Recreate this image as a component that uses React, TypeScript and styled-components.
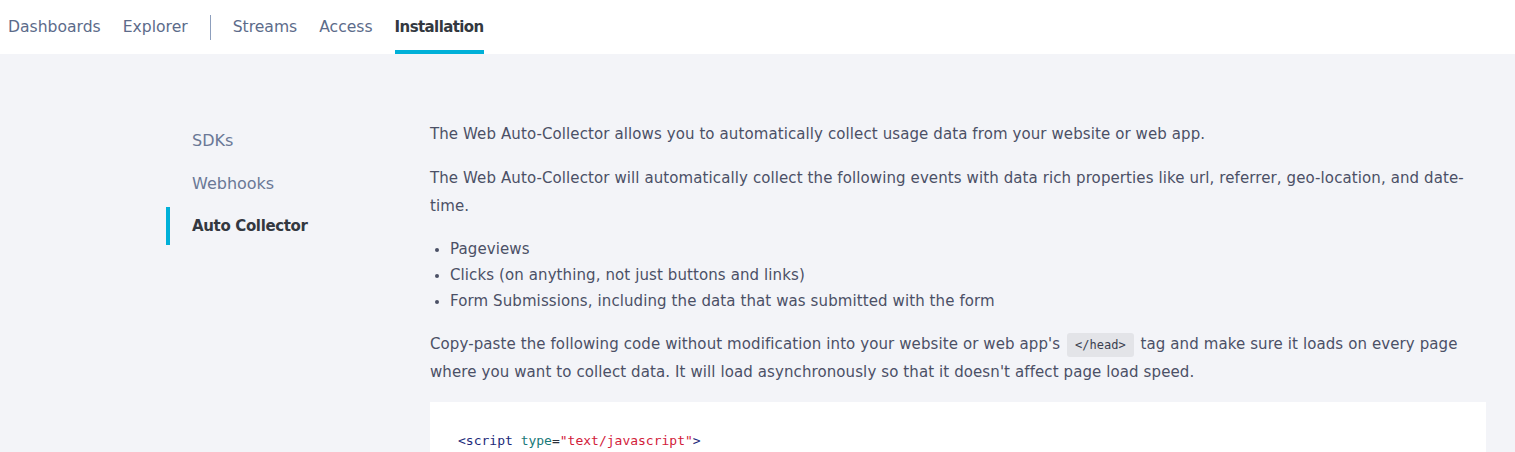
import styled, { createGlobalStyle } from "styled-components";

const GlobalStyle = createGlobalStyle`
  html, body {
    margin: 0;
    padding: 0;
    background: #f3f4f8;
    font-family: "DejaVu Sans", "Liberation Sans", sans-serif;
  }
`;

const Header = styled.header`
  height: 54px;
  background: #ffffff;
  display: flex;
  align-items: stretch;
  padding-left: 8px;
  gap: 22px;
`;

const NavItem = styled.a<{ $active?: boolean }>`
  display: flex;
  align-items: center;
  font-size: ${p => (p.$active ? "15px" : "15.6px")};
  letter-spacing: ${p => (p.$active ? "-0.6px" : "0")};
  color: ${p => (p.$active ? "#333840" : "#5c6b8a")};
  font-weight: ${p => (p.$active ? 700 : 400)};
  border-bottom: 4px solid ${p => (p.$active ? "#00b0d8" : "transparent")};
  border-top: 3px solid transparent;
  text-decoration: none;
  cursor: pointer;
`;

const Divider = styled.span`
  align-self: center;
  width: 1px;
  height: 25px;
  background: #8d9fbd;
`;

const Main = styled.main`
  display: grid;
  grid-template-columns: 264px 1fr;
  padding: 66px 29px 0 166px;
`;

const SideNav = styled.nav`
  display: flex;
  flex-direction: column;
  gap: 5px;
  padding-top: 1px;
`;

const SideItem = styled.a<{ $active?: boolean }>`
  height: 38px;
  display: flex;
  align-items: center;
  padding-left: 22px;
  font-size: ${p => (p.$active ? "15px" : "16px")};
  letter-spacing: ${p => (p.$active ? "-0.35px" : "0")};
  color: ${p => (p.$active ? "#333840" : "#6a7896")};
  font-weight: ${p => (p.$active ? 700 : 400)};
  border-left: 4px solid ${p => (p.$active ? "#00b0d8" : "transparent")};
  cursor: pointer;
`;

const Content = styled.section`
  color: #4b5066;
  font-size: 15px;
  letter-spacing: 0.1px;
`;

const Para = styled.p`
  margin: 0 0 15px;
  line-height: 28.5px;
`;

const Bullets = styled.ul`
  margin: 0 0 16px;
  padding-left: 20px;
  line-height: 26px;

  li::marker {
    font-size: 13px;
  }
`;

const InlineCode = styled.code`
  display: inline-block;
  font-family: "DejaVu Sans Mono", "Liberation Mono", monospace;
  font-size: 12px;
  line-height: 18px;
  letter-spacing: 0;
  background: #e3e4e8;
  color: #3a3f4f;
  border-radius: 3px;
  padding: 3px 8px;
  margin: 0 2px;
`;

const CodeBlock = styled.pre`
  margin: 0;
  background: #ffffff;
  padding: 29px 28px;
  font-family: "DejaVu Sans Mono", "Liberation Mono", monospace;
  font-size: 13px;
  line-height: 20px;
  letter-spacing: 0;
  color: #2b2f3a;
`;

const Tag = styled.span`
  color: #1c2a7a;
`;

const Attr = styled.span`
  color: #187979;
`;

const Str = styled.span`
  color: #d2203a;
`;

export default function App() {
  return (
    <>
      <GlobalStyle />
      <Header>
        <NavItem>Dashboards</NavItem>
        <NavItem>Explorer</NavItem>
        <Divider />
        <NavItem>Streams</NavItem>
        <NavItem>Access</NavItem>
        <NavItem $active>Installation</NavItem>
      </Header>
      <Main>
        <SideNav>
          <SideItem>SDKs</SideItem>
          <SideItem>Webhooks</SideItem>
          <SideItem $active>Auto Collector</SideItem>
        </SideNav>
        <Content>
          <Para>
            The Web Auto-Collector allows you to automatically collect usage data from your website or web app.
          </Para>
          <Para>
            The Web Auto-Collector will automatically collect the following events with data rich properties like url,
            referrer, geo-location, and date-time.
          </Para>
          <Bullets>
            <li>Pageviews</li>
            <li>Clicks (on anything, not just buttons and links)</li>
            <li>Form Submissions, including the data that was submitted with the form</li>
          </Bullets>
          <Para>
            Copy-paste the following code without modification into your website or web app's{" "}
            <InlineCode>&lt;/head&gt;</InlineCode> tag and make sure it loads on every page where you want to collect
            data. It will load asynchronously so that it doesn't affect page load speed.
          </Para>
          <CodeBlock>
            <Tag>&lt;script</Tag> <Attr>type</Attr>=<Str>"text/javascript"</Str>
            <Tag>&gt;</Tag>
            {"\n"}
          </CodeBlock>
        </Content>
      </Main>
    </>
  );
}
